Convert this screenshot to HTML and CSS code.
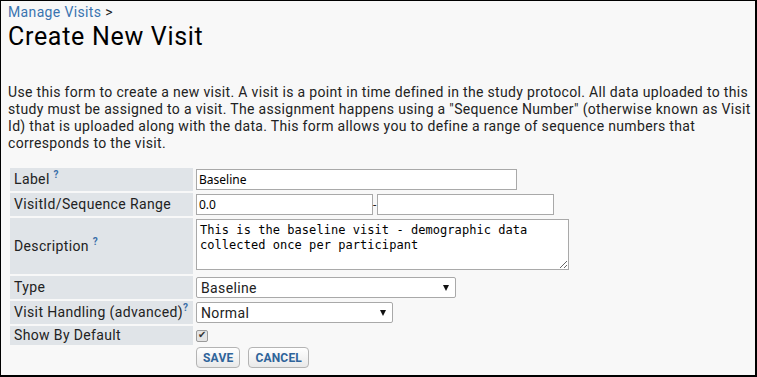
FILE: index.html
```html
<!DOCTYPE html>
<html lang="en">
<head>
  <meta charset="UTF-8" />
  <title>Create New Visit</title>
  <link rel="stylesheet" href="styles.css">
</head>
<body>

<div class="page">
  <div class="breadcrumb"><a href="#">Manage Visits</a> &gt;</div>
  <h1 class="title">Create New Visit</h1>

  <p class="intro">Use this form to create a new visit. A visit is a point in time defined in the study protocol. All data uploaded to this study must be assigned to a visit. The assignment happens using a "Sequence Number" (otherwise known as Visit Id) that is uploaded along with the data. This form allows you to define a range of sequence numbers that corresponds to the visit.</p>

  <form class="visit-form">
    <table class="form-table">
      <tr>
        <td class="label">Label <sup class="help">?</sup></td>
        <td class="field"><input type="text" class="txt txt-label" value="Baseline"></td>
      </tr>
      <tr>
        <td class="label">VisitId/Sequence Range</td>
        <td class="field"><input type="text" class="txt txt-range" value="0.0"><span class="dash">-</span><input type="text" class="txt txt-range" value=""></td>
      </tr>
      <tr>
        <td class="label">Description <sup class="help">?</sup></td>
        <td class="field"><textarea class="desc">This is the baseline visit - demographic data collected once per participant</textarea></td>
      </tr>
      <tr>
        <td class="label">Type</td>
        <td class="field">
          <span class="select-wrap">
            <select class="sel sel-type">
              <option>Baseline</option>
              <option>Scheduled follow-up</option>
              <option>Unscheduled</option>
            </select>
          </span>
        </td>
      </tr>
      <tr>
        <td class="label">Visit Handling (advanced)<sup class="help">?</sup></td>
        <td class="field">
          <span class="select-wrap">
            <select class="sel sel-handling">
              <option>Normal</option>
              <option>Single Visit</option>
            </select>
          </span>
        </td>
      </tr>
      <tr>
        <td class="label">Show By Default</td>
        <td class="field"><input type="checkbox" class="chk" checked></td>
      </tr>
      <tr>
        <td></td>
        <td class="buttons">
          <button type="submit" class="btn">SAVE</button>
          <button type="button" class="btn">CANCEL</button>
        </td>
      </tr>
    </table>
  </form>
</div>

</body>
</html>
```

FILE: styles.css
```css
html, body {
  margin: 0;
  padding: 0;
}

body {
  font-family: Roboto, "Liberation Sans", sans-serif;
  font-size: 14px;
  letter-spacing: 0.36px;
  color: #222;
}

.page {
  width: 757px;
  height: 377px;
  box-sizing: border-box;
  border-style: solid;
  border-color: #000;
  border-width: 1px 2px 2px 1px;
  background: #f8f8f8;
  padding: 3px 4px 0 7px;
  overflow: hidden;
}

.breadcrumb {
  line-height: 17px;
}

.breadcrumb a {
  color: #3a74b0;
  text-decoration: none;
}

.title {
  margin: 1px 0 0;
  font-size: 25px;
  font-weight: normal;
  letter-spacing: 0.7px;
  line-height: 30px;
  color: #000;
}

.intro {
  margin: 32px 0 0;
  line-height: 17px;
  letter-spacing: 0.33px;
}

.form-table {
  margin-top: 14px;
  border-collapse: separate;
  border-spacing: 2px;
}

.form-table td {
  padding: 1px;
}

.form-table td.label {
  width: 175px;
  padding: 0 4px;
  background: #e0e4e8;
  line-height: 17px;
  white-space: nowrap;
}

.help {
  font-size: 10px;
  font-weight: bold;
  line-height: 0;
  color: #3a6fa8;
  vertical-align: 6px;
  letter-spacing: 0;
}

.txt {
  box-sizing: border-box;
  height: 21px;
  margin: 0;
  padding: 0 2px;
  border: 1px solid #a9a9a9;
  background: #fff;
  font-family: "Noto Sans", "Open Sans", sans-serif;
  font-size: 12px;
  letter-spacing: 0;
  color: #000;
  vertical-align: middle;
  outline: none;
}

.txt-label {
  width: 321px;
}

.txt-range {
  width: 177px;
}

.dash {
  display: inline-block;
  width: 4px;
  vertical-align: middle;
  font-size: 12px;
  line-height: 12px;
  letter-spacing: 0;
}

.desc {
  box-sizing: border-box;
  width: 373px;
  height: 51px;
  margin: 0;
  padding: 3px 3px 2px;
  border: 1px solid #a9a9a9;
  background: #fff;
  font-family: "DejaVu Sans Mono", "Liberation Mono", monospace;
  font-size: 12px;
  letter-spacing: 0.05px;
  line-height: 15px;
  color: #000;
  outline: none;
}

.select-wrap {
  position: relative;
  display: inline-block;
  vertical-align: middle;
}

.select-wrap::after {
  content: "";
  position: absolute;
  right: 7px;
  top: 8px;
  border-left: 3px solid transparent;
  border-right: 3px solid transparent;
  border-top: 6px solid #111;
  pointer-events: none;
}

.sel {
  -webkit-appearance: none;
  appearance: none;
  display: block;
  box-sizing: border-box;
  height: 21px;
  margin: 0;
  padding: 0 4px;
  border: 1px solid #a9a9a9;
  border-radius: 2px;
  background: #fff;
  font-family: Roboto, "Liberation Sans", sans-serif;
  font-size: 14px;
  letter-spacing: 0.36px;
  color: #222;
  outline: none;
}

.sel-type {
  width: 260px;
}

.sel-handling {
  width: 197px;
}

.chk {
  -webkit-appearance: none;
  appearance: none;
  position: relative;
  display: block;
  box-sizing: border-box;
  width: 12px;
  height: 12px;
  margin: 3px 0 2px;
  border: 1px solid #9a9a9a;
  border-radius: 2px;
  background: #e4e4e4;
}

.chk:checked::after {
  content: "\2714";
  position: absolute;
  left: 1px;
  top: -2px;
  font-size: 10px;
  color: #333;
}

.form-table td.buttons {
  padding: 0 1px;
  display: flex;
  gap: 8px;
}

.btn {
  box-sizing: border-box;
  height: 21px;
  margin: 0;
  padding: 0 6px;
  border: 1px solid #b4b4b4;
  border-radius: 4px;
  background: linear-gradient(#ffffff, #e9e9e9);
  font-family: Roboto, "Liberation Sans", sans-serif;
  font-size: 12px;
  font-weight: bold;
  letter-spacing: 0.2px;
  color: #2f649a;
  cursor: pointer;
}

.btn:hover {
  background: linear-gradient(#f4f4f4, #dcdcdc);
}
```
